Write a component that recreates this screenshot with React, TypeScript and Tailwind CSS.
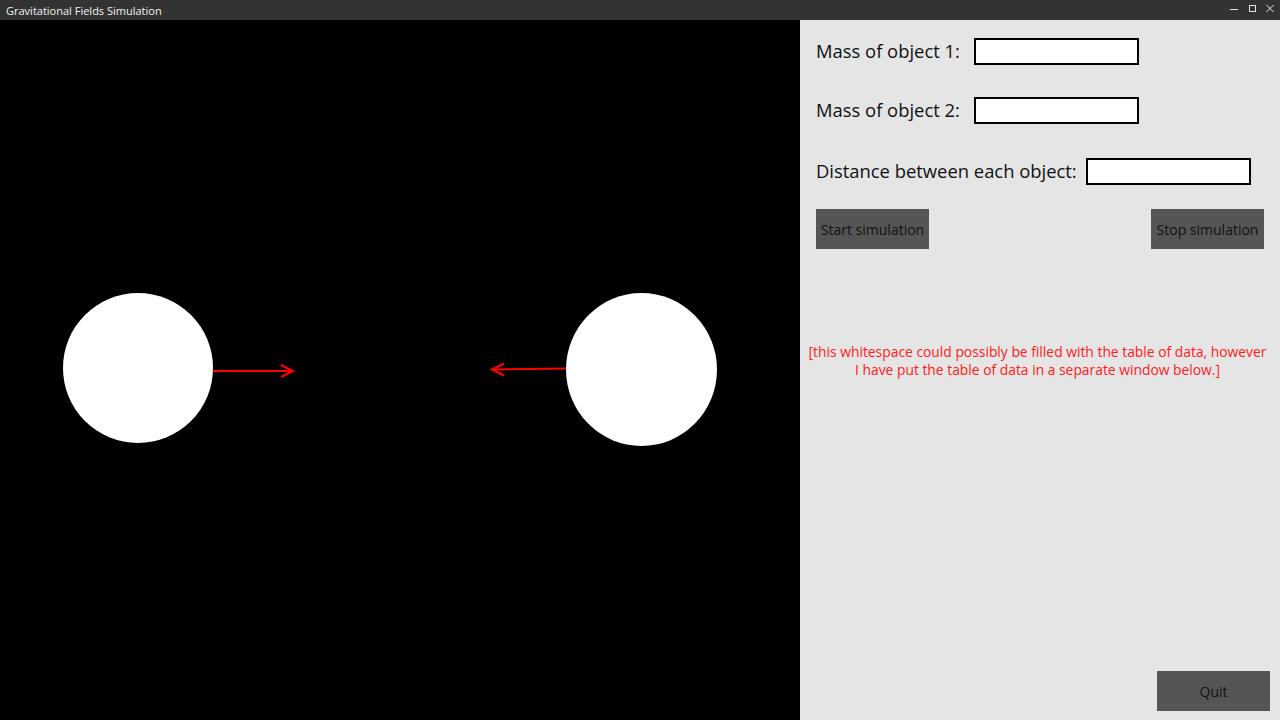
import { useState } from 'react'

const font = { fontFamily: '"Open Sans", "Noto Sans", sans-serif' }

function TitleBar() {
  return (
    <div className="h-[20px] bg-[#333333] flex items-center justify-between text-[#f2f2f2]">
      <span className="pl-[6px] text-[11px] leading-none">Gravitational Fields Simulation</span>
      <div className="flex items-center h-full">
        <svg width="18" height="20" viewBox="0 0 18 20" className="stroke-[#e6e6e6]">
          <line x1="4" y1="9.5" x2="12" y2="9.5" strokeWidth="1" />
        </svg>
        <svg width="18" height="20" viewBox="0 0 18 20" className="stroke-[#e6e6e6]" fill="none">
          <rect x="5.5" y="5.5" width="6" height="6" strokeWidth="1" />
        </svg>
        <svg width="18" height="20" viewBox="0 0 18 20" className="stroke-[#e6e6e6]">
          <line x1="4.5" y1="5" x2="11.5" y2="12" strokeWidth="1" />
          <line x1="11.5" y1="5" x2="4.5" y2="12" strokeWidth="1" />
        </svg>
      </div>
    </div>
  )
}

function Arrow({ x1, y1, x2, y2 }: { x1: number; y1: number; x2: number; y2: number }) {
  const dir = x2 > x1 ? 1 : -1
  return (
    <g stroke="#ff0000" strokeWidth="2" fill="none">
      <line x1={x1} y1={y1} x2={x2} y2={y2} />
      <polyline points={`${x2 - dir * 12},${y2 - 6} ${x2},${y2} ${x2 - dir * 12},${y2 + 6}`} />
    </g>
  )
}

function Canvas() {
  return (
    <div className="w-[800px] h-full bg-black">
      <svg width="800" height="700" viewBox="0 0 800 700">
        <circle cx="138" cy="348" r="75" fill="#ffffff" />
        <ellipse cx="641.5" cy="349.5" rx="75.5" ry="76.5" fill="#ffffff" />
        <Arrow x1={213} y1={351} x2={293} y2={351} />
        <Arrow x1={566} y1={348.5} x2={492} y2={349.5} />
      </svg>
    </div>
  )
}

function Field({ label, value, onChange, gap }: { label: string; value: string; onChange: (v: string) => void; gap: string }) {
  return (
    <div className={`flex items-start h-[27px] ${gap}`}>
      <span className="text-[18.4px] leading-[25px] text-[#111]">{label}</span>
      <input
        value={value}
        onChange={(e) => onChange(e.target.value)}
        className="w-[165px] h-[27px] bg-white border-2 border-black outline-none px-1 text-sm"
      />
    </div>
  )
}

export default function App() {
  const [m1, setM1] = useState('')
  const [m2, setM2] = useState('')
  const [dist, setDist] = useState('')

  return (
    <div className="w-[1280px] h-[720px] flex flex-col overflow-hidden" style={font}>
      <TitleBar />
      <div className="flex flex-1 min-h-0">
        <Canvas />
        <div className="w-[480px] bg-[#e5e5e5] flex flex-col pl-[16px] pr-[16px] pt-[18px] pb-[9px]">
          <Field label="Mass of object 1:" value={m1} onChange={setM1} gap="gap-[14px]" />
          <div className="mt-[32px]">
            <Field label="Mass of object 2:" value={m2} onChange={setM2} gap="gap-[14px]" />
          </div>
          <div className="mt-[34px]">
            <Field label="Distance between each object:" value={dist} onChange={setDist} gap="gap-[9px]" />
          </div>
          <div className="mt-[24px] flex justify-between">
            <button className="w-[113px] h-[40px] bg-[#555555] text-[14px] text-[#111]">Start simulation</button>
            <button className="w-[113px] h-[40px] bg-[#555555] text-[14px] text-[#111]">Stop simulation</button>
          </div>
          <p className="mt-[94px] -ml-[13px] -mr-[8px] text-center text-[13.85px] leading-[18px] text-[#ff2020]">
            [this whitespace could possibly be filled with the table of data, however
            <br />
            I have put the table of data in a separate window below.]
          </p>
          <div className="flex-1" />
          <div className="flex justify-end -mr-[6px]">
            <button className="w-[113px] h-[40px] bg-[#555555] text-[14px] text-[#111]">Quit</button>
          </div>
        </div>
      </div>
    </div>
  )
}
